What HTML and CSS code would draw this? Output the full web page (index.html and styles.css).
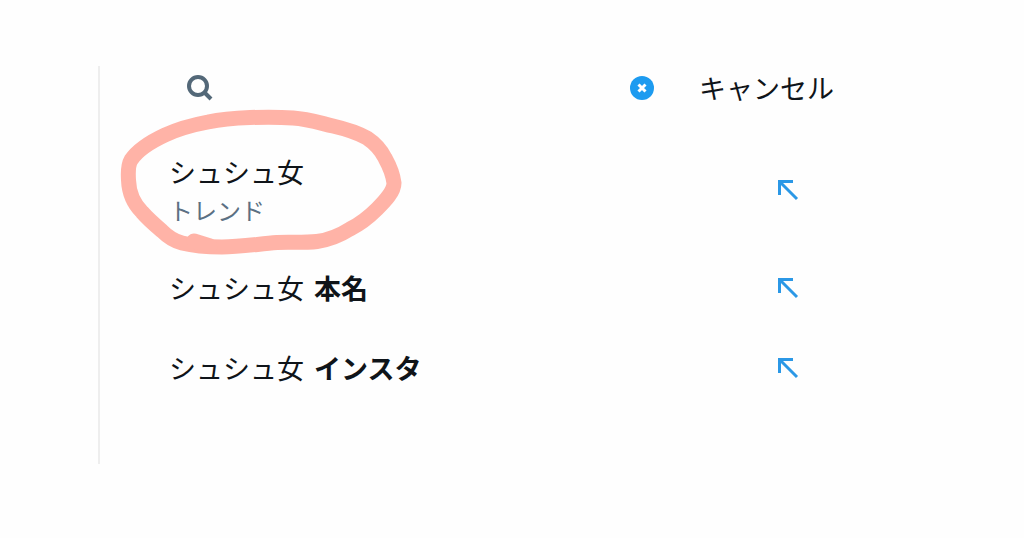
FILE: index.html
```html
<!DOCTYPE html>
<html lang="ja">
<head>
    <meta charset="UTF-8">
    <meta name="viewport" content="width=device-width, initial-scale=1.0">
    <title>検索</title>
    <link rel="stylesheet" href="styles.css">
</head>
<body>
    <main class="panel">
        <form class="search">
            <label class="search-label" for="query" aria-label="検索">
                <svg class="search-icon" viewBox="0 0 26 26"><circle cx="11" cy="11" r="9"/><path d="M17.5 17.5L24 24"/></svg>
            </label>
            <input class="query" id="query" type="text">
            <button class="clear" type="reset" aria-label="クリア">
                <svg viewBox="0 0 24 24"><circle cx="12" cy="12" r="12"/><path d="M8.5 8.5l7 7M15.5 8.5l-7 7"/></svg>
            </button>
            <button class="cancel" type="button">キャンセル</button>
        </form>
        <ul class="list">
            <li class="item">
                <a class="link" href="#">
                    <span class="title">シュシュ女</span>
                    <span class="sub">トレンド</span>
                </a>
                <button class="fill" type="button" aria-label="入力">
                    <svg viewBox="0 0 24 24"><path d="M3.5 17V3.5H17M4 4L21 21"/></svg>
                </button>
                <svg class="circle" viewBox="0 0 282 145">
                    <path d="M8.5 70C8 62 8 55 11 50C17 41 30 32 45 25C58 19 72 15 88 12C102 9 116 8 130 7.500C145 7 160 7 173 8C188 9 200 13 213 16C226 19 238 23 247 28C256 34 261 40 265 48C270 57 273 65 274 73C274 82 265 91 257 99C249 107 240 114 230 119C219 126 208 130 197 131.500C184 133 170 132 157 132.500C138 134 120 137 102 137C88 137 74 136 62 133C54 131 47 126 42 121C35 115 28 109 22 102C15 95 9 84 8.500 70Z"/>
                    <path d="M74 131L90 136"/>
                </svg>
            </li>
            <li class="item">
                <a class="link" href="#"><span class="title">シュシュ女 <b>本名</b></span></a>
                <button class="fill" type="button" aria-label="入力">
                    <svg viewBox="0 0 24 24"><path d="M3.5 17V3.5H17M4 4L21 21"/></svg>
                </button>
            </li>
            <li class="item">
                <a class="link" href="#"><span class="title">シュシュ女 <b>インスタ</b></span></a>
                <button class="fill" type="button" aria-label="入力">
                    <svg viewBox="0 0 24 24"><path d="M3.5 17V3.5H17M4 4L21 21"/></svg>
                </button>
            </li>
        </ul>
    </main>
</body>
</html>
```

FILE: styles.css
```css
*{
    margin: 0;
    padding: 0;
    box-sizing: border-box;
}
body{
    background: #fefefe;
    color: #0f1419;
    font-family: "Noto Sans CJK JP", sans-serif;
    font-size: 27px;
}
.panel{
    max-width: 740px;
    margin: 66px 98px;
    padding-bottom: 56px;
    border-left: 2px solid #eeeeee;
}
button{
    border: none;
    background: none;
    color: inherit;
    font: inherit;
    cursor: pointer;
}
svg{
    display: block;
    fill: none;
}
.search{
    display: flex;
    align-items: center;
    height: 44px;
    margin-bottom: 22px;
    padding-left: 87px;
}
.search-icon{
    width: 26px;
    height: 26px;
    stroke: #536878;
    stroke-width: 4;
}
.query{
    flex: 1;
    min-width: 0;
    padding: 0 12px;
    border: none;
    outline: none;
    background: transparent;
    font: inherit;
}
.clear svg{
    width: 24px;
    height: 24px;
}
.clear circle{
    fill: #1d9bf0;
}
.clear path{
    stroke: #ffffff;
    stroke-width: 3;
}
.cancel{
    margin-left: 45px;
    padding-right: 4px;
    line-height: 40px;
}
.list{
    list-style: none;
}
.item{
    position: relative;
    display: flex;
    align-items: center;
    justify-content: space-between;
    padding: 20px 38px 20px 69px;
}
.link{
    color: inherit;
    text-decoration: none;
}
.title{
    display: block;
    line-height: 40px;
}
.title b{
    margin-left: 4px;
}
.sub{
    display: block;
    color: #5b7083;
    font-size: 24px;
    line-height: 36px;
}
.fill svg{
    width: 24px;
    height: 24px;
    stroke: #2b98e6;
    stroke-width: 3;
}
/* marker stroke drawn round the trend */
.circle{
    position: absolute;
    top: -22px;
    left: 20px;
    width: 282px;
    height: 145px;
    overflow: visible;
    stroke: #ffb3a7;
    stroke-width: 15;
    stroke-linecap: round;
    stroke-linejoin: round;
    pointer-events: none;
}
```
